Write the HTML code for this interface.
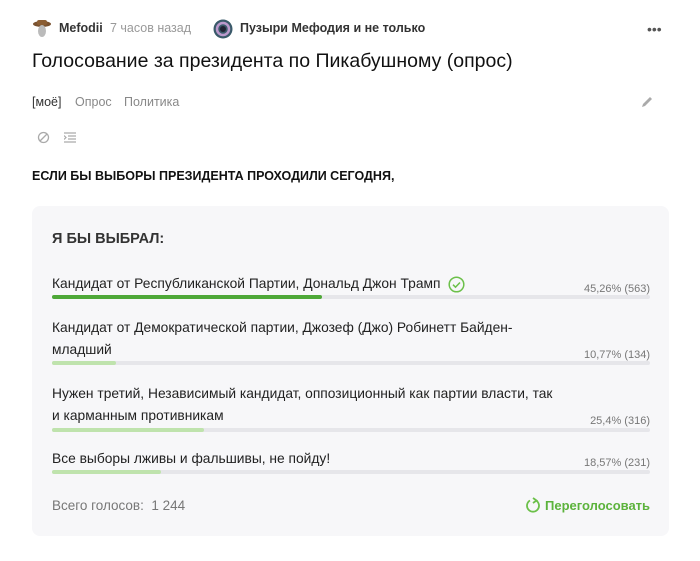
<!DOCTYPE html>
<html><head><meta charset="utf-8"><style>
body{margin:0;width:700px;height:561px;background:#fff;font-family:"Liberation Sans",sans-serif;color:#111;position:relative;overflow:hidden}
.a{position:absolute;white-space:nowrap}
.box{position:absolute;left:32px;top:206px;width:637px;height:330px;background:#f7f7f9;border-radius:8px}
.opt{font-size:13.8px;color:#222}
.pct{font-size:11px;color:#777;right:50px}
.bar{position:absolute;left:52px;width:598px;height:4px;background:#e6e6ea;border-radius:2px}
.bar i{display:block;height:4px;border-radius:2px;background:#bfe3ad}
</style></head><body>
<svg class="a" style="left:32px;top:18px" width="20" height="20"><ellipse cx="10" cy="6" rx="9" ry="3" fill="#7a5230"/><rect x="5" y="2" width="10" height="5" rx="2" fill="#8b5e34"/><ellipse cx="10" cy="13" rx="4" ry="6" fill="#bbb"/></svg>
<div class="a" style="left:59px;top:21px;font-size:12.5px;font-weight:bold;color:#333">Mefodii</div>
<div class="a" style="left:110px;top:21px;font-size:12.5px;color:#999">7 часов назад</div>
<svg class="a" style="left:213px;top:19px" width="20" height="20"><circle cx="10" cy="10" r="9.5" fill="#3a5a6a"/><circle cx="10" cy="10" r="6" fill="none" stroke="#b9c" stroke-width="2.5"/><circle cx="10" cy="10" r="3" fill="#223"/></svg>
<div class="a" style="left:240px;top:21px;font-size:12.5px;font-weight:bold;color:#333">Пузыри Мефодия и не только</div>
<div class="a" style="left:647px;top:21px;font-size:14px;color:#555;letter-spacing:0px">•••</div>
<div class="a" style="left:32px;top:50px;font-size:19.5px;color:#111">Голосование за президента по Пикабушному (опрос)</div>
<div class="a" style="left:32px;top:95px;font-size:12.5px;color:#333">[моё]</div>
<div class="a" style="left:75px;top:95px;font-size:12.5px;color:#888">Опрос</div>
<div class="a" style="left:124px;top:95px;font-size:12.5px;color:#888">Политика</div>
<svg class="a" style="left:640px;top:95px" width="14" height="14"><path d="M2 12l1-3 7-7 2 2-7 7z" fill="#aaa"/></svg>
<svg class="a" style="left:37px;top:131px" width="13" height="13"><circle cx="6.5" cy="6.5" r="5" fill="none" stroke="#aaa" stroke-width="1.3"/><path d="M3 10L10 3" stroke="#aaa" stroke-width="1.3"/></svg>
<svg class="a" style="left:64px;top:132px" width="12" height="11"><path d="M0 1h12M4 4h8M4 7h8M0 10h12M0 3.5l2 2-2 2" stroke="#aaa" stroke-width="1.2" fill="none"/></svg>
<div class="a" style="left:32px;top:169px;font-size:12.5px;font-weight:bold;color:#111">ЕСЛИ БЫ ВЫБОРЫ ПРЕЗИДЕНТА ПРОХОДИЛИ СЕГОДНЯ,</div>
<div class="box"></div>
<div class="a" style="left:52px;top:231px;font-size:14.5px;font-weight:bold;color:#333">Я БЫ ВЫБРАЛ:</div>
<div class="a opt" style="left:52px;top:276px">Кандидат от Республиканской Партии, Дональд Джон Трамп</div>
<svg class="a" style="left:448px;top:276px" width="17" height="17"><circle cx="8.5" cy="8.5" r="7.3" fill="none" stroke="#6cc04a" stroke-width="1.5"/><path d="M5 8.7l2.5 2.5 4.5-4.7" fill="none" stroke="#6cc04a" stroke-width="1.5"/></svg>
<div class="a pct" style="top:283px">45,26% (563)</div>
<div class="bar" style="top:295px"><i style="width:270px;background:#4ea838"></i></div>
<div class="a opt" style="left:52px;top:317px;line-height:22px">Кандидат от Демократической партии, Джозеф (Джо) Робинетт Байден-<br>младший</div>
<div class="a pct" style="top:349px">10,77% (134)</div>
<div class="bar" style="top:361px"><i style="width:64px"></i></div>
<div class="a opt" style="left:52px;top:383px;line-height:22px">Нужен третий, Независимый кандидат, оппозиционный как партии власти, так<br>и карманным противникам</div>
<div class="a pct" style="top:415px">25,4% (316)</div>
<div class="bar" style="top:428px"><i style="width:152px"></i></div>
<div class="a opt" style="left:52px;top:451px">Все выборы лживы и фальшивы, не пойду!</div>
<div class="a pct" style="top:457px">18,57% (231)</div>
<div class="bar" style="top:470px"><i style="width:109px"></i></div>
<div class="a" style="left:52px;top:498px;font-size:13.5px;color:#777">Всего голосов:&nbsp; 1 244</div>
<svg class="a" style="left:525px;top:497px" width="16" height="16"><path d="M11 3.5A6 6 0 1 1 5 3.5" fill="none" stroke="#6cc04a" stroke-width="1.8"/><path d="M8 1l3.5 2.5L8 6" fill="none" stroke="#6cc04a" stroke-width="1.8"/></svg>
<div class="a" style="left:545px;top:498px;font-size:13px;font-weight:bold;color:#5cb33c">Переголосовать</div>
</body></html>
